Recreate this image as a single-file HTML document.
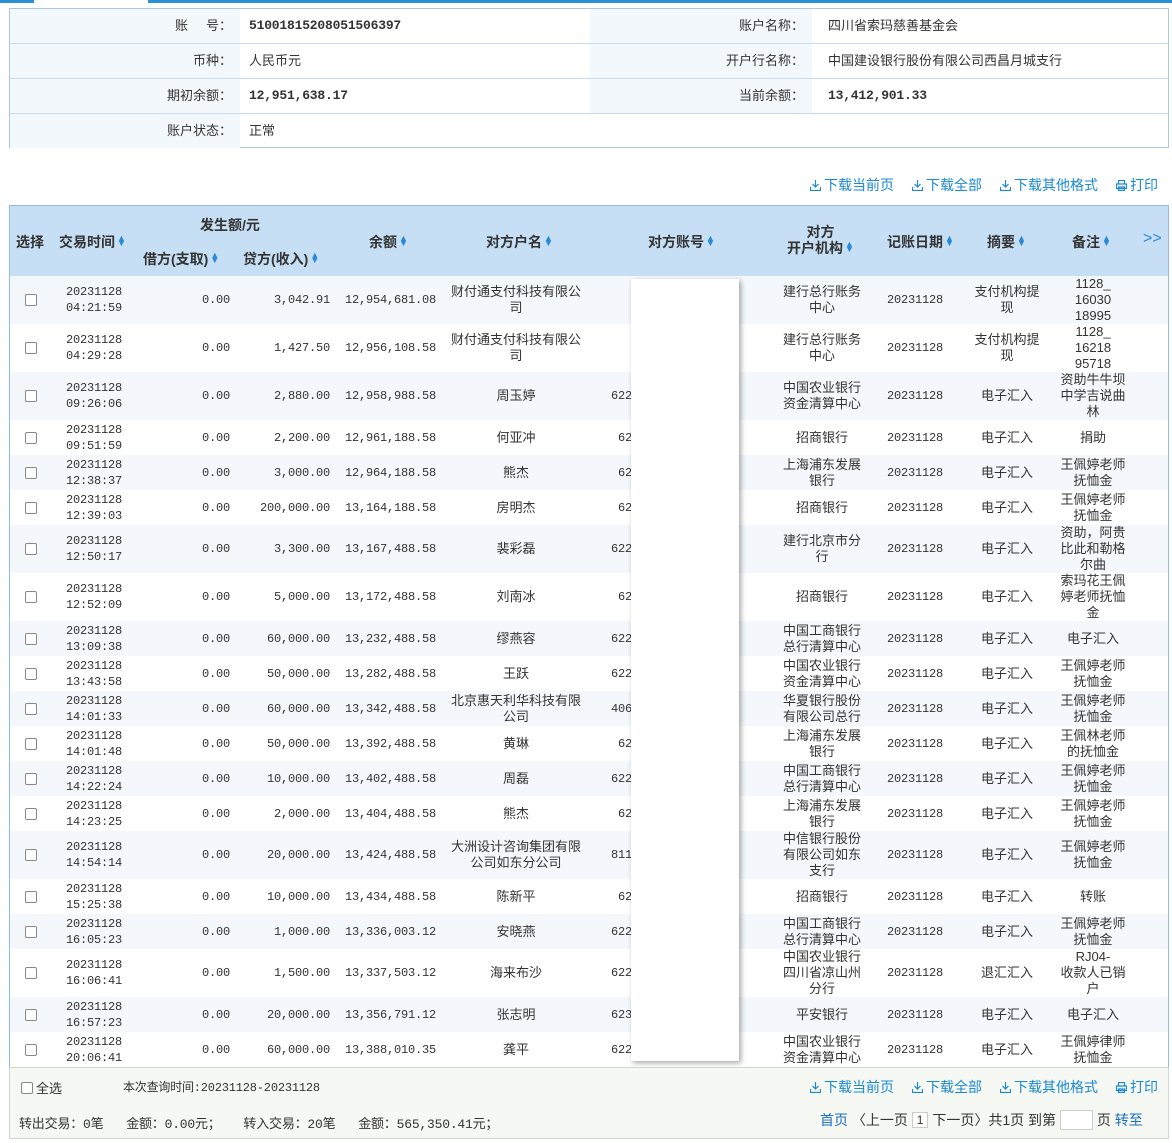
<!DOCTYPE html>
<html><head><meta charset="utf-8">
<style>
*{margin:0;padding:0;box-sizing:border-box}
body{width:1172px;height:1143px;position:relative;background:#fff;font-family:"Liberation Sans","Noto Sans CJK SC",sans-serif;font-size:13px;color:#333;overflow:hidden}
.a{position:absolute}
.num{font-family:"Liberation Mono","Noto Sans CJK SC",monospace;font-size:12px;letter-spacing:-0.2px}
.info{left:9px;top:8px;width:1160px;height:140px;border:1px solid #a9c8e6;}
.ir{position:absolute;left:0;width:1158px;height:35px;border-bottom:1px solid #c9dcef}
.ir div{position:absolute;top:0;height:34px;line-height:34px}
.lb{background:#f3f8fd;text-align:right;padding-right:8px}
.tl{color:#1a8ad3;font-size:14px}
.tl span{margin-left:18px}
.ico{display:inline-block;width:11px;height:11px;vertical-align:-1px;margin-right:3px}
.hdr{left:9px;top:205px;width:1160px;height:71px;background:#c7dff4;border:1px solid #8fbbe4;border-bottom:none;font-weight:bold;color:#333;font-size:14px}
.hdr div{position:absolute}
.ar{color:#2a8ad8;font-size:9px;display:inline-block;line-height:5px;vertical-align:1px;margin-left:2px}
.tb{left:9px;top:276px;width:1160px;height:792px;border-left:1px solid #8fbbe4;border-right:1px solid #8fbbe4}
.row{position:absolute;left:0;width:1158px}
.row:nth-child(odd){background:#f4f8fc}
.c{position:absolute;top:0;height:100%;display:flex;align-items:center;line-height:16px}
.cb{width:12px;height:12px;border:1px solid #888;border-radius:2px;background:#fff}
.foot{left:9px;top:1067px;width:1160px;height:72px;background:#f6f8f3;border:1px solid #cfd8d0}
</style></head><body>
<div class="a" style="left:0;top:0;width:34px;height:3px;background:#2a8fd6"></div>
<div class="a" style="left:148px;top:0;width:1024px;height:3px;background:#2a8fd6"></div>

<div class="a info">
 <div class="ir" style="top:0"><div class="lb" style="left:0;width:230px">账&nbsp;&nbsp;&nbsp;&nbsp;&nbsp;号：</div><div class="num" style="left:239px;font-weight:bold;font-size:13px">5100181520805150639​7</div><div class="lb" style="left:580px;width:222px">账户名称：</div><div style="left:818px">四川省索玛慈善基金会</div></div>
 <div class="ir" style="top:35px"><div class="lb" style="left:0;width:230px">币种：</div><div style="left:239px">人民币元</div><div class="lb" style="left:580px;width:222px">开户行名称：</div><div style="left:818px">中国建设银行股份有限公司西昌月城支行</div></div>
 <div class="ir" style="top:70px"><div class="lb" style="left:0;width:230px">期初余额：</div><div class="num" style="left:239px;font-weight:bold;font-size:13px">12,951,638.17</div><div class="lb" style="left:580px;width:222px">当前余额：</div><div class="num" style="left:818px;font-weight:bold;font-size:13px">13,412,901.33</div></div>
 <div class="ir" style="top:105px;border:none"><div class="lb" style="left:0;width:230px">账户状态：</div><div style="left:239px">正常</div></div>
</div>

<div class="a tl" style="right:14px;top:175px"><span><svg class="ico" viewBox="0 0 11 11"><path d="M5.5 0v7M2.5 4l3 3 3-3M0.5 7v3.5h10V7" fill="none" stroke="#1a8ad3" stroke-width="1.2"/></svg>下载当前页</span><span><svg class="ico" viewBox="0 0 11 11"><path d="M5.5 0v7M2.5 4l3 3 3-3M0.5 7v3.5h10V7" fill="none" stroke="#1a8ad3" stroke-width="1.2"/></svg>下载全部</span><span><svg class="ico" viewBox="0 0 11 11"><path d="M5.5 0v7M2.5 4l3 3 3-3M0.5 7v3.5h10V7" fill="none" stroke="#1a8ad3" stroke-width="1.2"/></svg>下载其他格式</span><span><svg class="ico" viewBox="0 0 11 11"><path d="M2.5 4V0.5h6V4M0.5 4h10v4.5h-10zM2.5 7h6v3.5h-6z" fill="none" stroke="#1a8ad3" stroke-width="1.2"/></svg>打印</span></div>

<div class="a hdr">
 <div style="left:6px;top:26px">选择</div>
 <div style="left:49px;top:26px">交易时间<span class="ar">▲<br>▼</span></div>
 <div style="left:190px;top:9px">发生额/元</div>
 <div style="left:133px;top:43px">借方(支取)<span class="ar">▲<br>▼</span></div>
 <div style="left:233px;top:43px">贷方(收入)<span class="ar">▲<br>▼</span></div>
 <div style="left:359px;top:26px">余额<span class="ar">▲<br>▼</span></div>
 <div style="left:476px;top:26px">对方户名<span class="ar">▲<br>▼</span></div>
 <div style="left:638px;top:26px">对方账号<span class="ar">▲<br>▼</span></div>
 <div style="left:777px;top:18px;text-align:center;line-height:16px">对方<br>开户机构<span class="ar">▲<br>▼</span></div>
 <div style="left:877px;top:26px">记账日期<span class="ar">▲<br>▼</span></div>
 <div style="left:977px;top:26px">摘要<span class="ar">▲<br>▼</span></div>
 <div style="left:1062px;top:26px">备注<span class="ar">▲<br>▼</span></div>
 <div style="left:1133px;top:24px;color:#2a8ad8;font-weight:normal;font-size:16px">&gt;&gt;</div>
</div>

<div class="a tb" id="tb"></div>
<div class="a" style="left:631px;top:279px;width:108px;height:782px;background:#fff;box-shadow:2px 2px 5px rgba(0,0,0,0.35)"></div>

<div class="a foot">
 <div class="a" style="left:11px;top:10px;display:flex;align-items:center"><div class="cb" style="margin-right:3px"></div>全选</div>
 <div class="a num" style="left:113px;top:10px;font-size:12px">本次查询时间:20231128-20231128</div>
 <div class="a tl" style="right:10px;top:9px"><span><svg class="ico" viewBox="0 0 11 11"><path d="M5.5 0v7M2.5 4l3 3 3-3M0.5 7v3.5h10V7" fill="none" stroke="#1a8ad3" stroke-width="1.2"/></svg>下载当前页</span><span><svg class="ico" viewBox="0 0 11 11"><path d="M5.5 0v7M2.5 4l3 3 3-3M0.5 7v3.5h10V7" fill="none" stroke="#1a8ad3" stroke-width="1.2"/></svg>下载全部</span><span><svg class="ico" viewBox="0 0 11 11"><path d="M5.5 0v7M2.5 4l3 3 3-3M0.5 7v3.5h10V7" fill="none" stroke="#1a8ad3" stroke-width="1.2"/></svg>下载其他格式</span><span><svg class="ico" viewBox="0 0 11 11"><path d="M2.5 4V0.5h6V4M0.5 4h10v4.5h-10zM2.5 7h6v3.5h-6z" fill="none" stroke="#1a8ad3" stroke-width="1.2"/></svg>打印</span></div>
 <div class="a num" style="left:9px;top:45px;font-size:13px">转出交易：0笔&nbsp;&nbsp;&nbsp;金额：0.00元；&nbsp;&nbsp;&nbsp;转入交易：20笔&nbsp;&nbsp;&nbsp;金额：565,350.41元；</div>
 <div class="a" style="left:810px;top:42px;display:flex;align-items:center;font-size:14px;gap:0"><span style="color:#1a6fc0">首页</span>&nbsp;〈上一页&nbsp;<span style="border:1px solid #ccc;background:#fff;padding:0 4px;font-size:12px">1</span>&nbsp;下一页〉共1页&nbsp;到第&nbsp;<span style="display:inline-block;width:33px;height:20px;border:1px solid #ccc;background:#fff"></span>&nbsp;页&nbsp;<span style="color:#1a6fc0">转至</span></div>
</div>

<script>
var R=[
[48,"04:21:59","3,042.91","12,954,681.08","财付通支付科技有限公<br>司","","建行总行账务<br>中心","支付机构提<br>现","1128_<br>16030<br>18995"],
[48,"04:29:28","1,427.50","12,956,108.58","财付通支付科技有限公<br>司","","建行总行账务<br>中心","支付机构提<br>现","1128_<br>16218<br>95718"],
[48,"09:26:06","2,880.00","12,958,988.58","周玉婷","622","中国农业银行<br>资金清算中心","电子汇入","资助牛牛坝<br>中学吉说曲<br>林"],
[35,"09:51:59","2,200.00","12,961,188.58","何亚冲","62","招商银行","电子汇入","捐助"],
[35,"12:38:37","3,000.00","12,964,188.58","熊杰","62","上海浦东发展<br>银行","电子汇入","王佩婷老师<br>抚恤金"],
[35,"12:39:03","200,000.00","13,164,188.58","房明杰","62","招商银行","电子汇入","王佩婷老师<br>抚恤金"],
[48,"12:50:17","3,300.00","13,167,488.58","裴彩磊","622","建行北京市分<br>行","电子汇入","资助，阿贵<br>比此和勒格<br>尔曲"],
[48,"12:52:09","5,000.00","13,172,488.58","刘南冰","62","招商银行","电子汇入","索玛花王佩<br>婷老师抚恤<br>金"],
[35,"13:09:38","60,000.00","13,232,488.58","缪燕容","622","中国工商银行<br>总行清算中心","电子汇入","电子汇入"],
[35,"13:43:58","50,000.00","13,282,488.58","王跃","622","中国农业银行<br>资金清算中心","电子汇入","王佩婷老师<br>抚恤金"],
[35,"14:01:33","60,000.00","13,342,488.58","北京惠天利华科技有限<br>公司","406","华夏银行股份<br>有限公司总行","电子汇入","王佩婷老师<br>抚恤金"],
[35,"14:01:48","50,000.00","13,392,488.58","黄琳","62","上海浦东发展<br>银行","电子汇入","王佩林老师<br>的抚恤金"],
[35,"14:22:24","10,000.00","13,402,488.58","周磊","622","中国工商银行<br>总行清算中心","电子汇入","王佩婷老师<br>抚恤金"],
[35,"14:23:25","2,000.00","13,404,488.58","熊杰","62","上海浦东发展<br>银行","电子汇入","王佩婷老师<br>抚恤金"],
[48,"14:54:14","20,000.00","13,424,488.58","大洲设计咨询集团有限<br>公司如东分公司","811","中信银行股份<br>有限公司如东<br>支行","电子汇入","王佩婷老师<br>抚恤金"],
[35,"15:25:38","10,000.00","13,434,488.58","陈新平","62","招商银行","电子汇入","转账"],
[35,"16:05:23","1,000.00","13,336,003.12","安晓燕","622","中国工商银行<br>总行清算中心","电子汇入","王佩婷老师<br>抚恤金"],
[48,"16:06:41","1,500.00","13,337,503.12","海来布沙","622","中国农业银行<br>四川省凉山州<br>分行","退汇汇入","RJ04-<br>收款人已销<br>户"],
[35,"16:57:23","20,000.00","13,356,791.12","张志明","623","平安银行","电子汇入","电子汇入"],
[35,"20:06:41","60,000.00","13,388,010.35","龚平","622","中国农业银行<br>资金清算中心","电子汇入","王佩婷律师<br>抚恤金"]];
var h="",y=0;
R.forEach(function(r){
h+='<div class="row" style="top:'+y+'px;height:'+r[0]+'px">'+
'<div class="c" style="left:15px"><div class="cb"></div></div>'+
'<div class="c num" style="left:42px;width:84px;justify-content:center;text-align:center">20231128<br>'+r[1]+'</div>'+
'<div class="c num" style="left:120px;width:100px;justify-content:flex-end">0.00</div>'+
'<div class="c num" style="left:220px;width:100px;justify-content:flex-end">'+r[2]+'</div>'+
'<div class="c num" style="left:320px;width:106px;justify-content:flex-end">'+r[3]+'</div>'+
'<div class="c" style="left:432px;width:148px;justify-content:center;text-align:center">'+r[4]+'</div>'+
'<div class="c num" style="left:580px;width:42px;justify-content:flex-end">'+r[5]+'</div>'+
'<div class="c" style="left:760px;width:104px;justify-content:center;text-align:center">'+r[6]+'</div>'+
'<div class="c num" style="left:862px;width:86px;justify-content:center">20231128</div>'+
'<div class="c" style="left:946px;width:102px;justify-content:center;text-align:center">'+r[7]+'</div>'+
'<div class="c" style="left:1036px;width:94px;justify-content:center;text-align:center">'+r[8]+'</div></div>';
y+=r[0];});
document.getElementById('tb').innerHTML=h;
</script>
</body></html>
